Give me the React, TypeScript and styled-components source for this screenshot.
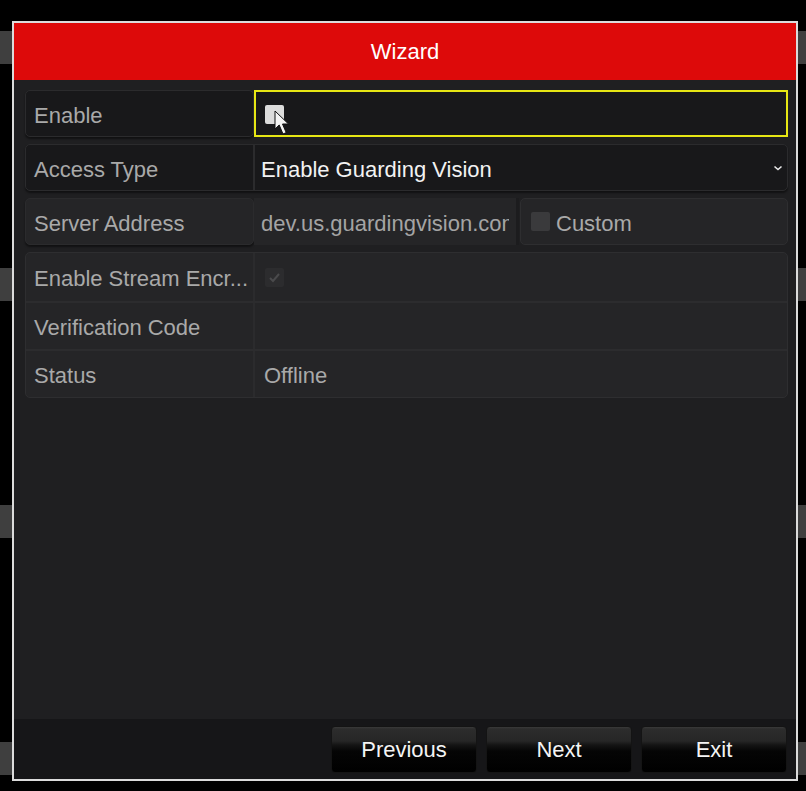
import React from "react";
import styled, { createGlobalStyle } from "styled-components";

const Global = createGlobalStyle`
  html, body { margin: 0; padding: 0; background: #000; }
  body { font-family: "Liberation Sans", Arial, sans-serif; }
  * { box-sizing: border-box; }
`;

const Page = styled.div`
  width: 806px;
  height: 791px;
  background: #000;
  display: flex;
  flex-direction: row;
  overflow: hidden;
`;

const Strip = styled.div<{ $w: number }>`
  width: ${(p) => p.$w}px;
  flex: none;
  display: flex;
  flex-direction: column;
  gap: 204px;
  padding-top: 31px;
`;

const StripBar = styled.div`
  height: 33px;
  background: #3f3f3f;
`;

const Dialog = styled.div`
  margin-top: 21px;
  width: 786px;
  height: 760px;
  flex: none;
  border: 2px solid #dcdcdc;
  background: #1f1f21;
  display: flex;
  flex-direction: column;
`;

const Header = styled.div`
  height: 57px;
  flex: none;
  background: #dd0a0a;
  color: #fff;
  font-size: 22px;
  display: flex;
  align-items: center;
  justify-content: center;
`;

const Content = styled.div`
  flex: 1;
  display: flex;
  flex-direction: column;
  gap: 7px;
  padding: 10px 8px 0 11px;
`;

const Row = styled.div`
  display: grid;
  grid-template-columns: 229px 1fr;
  height: 47px;
`;

const BoxRow = styled.div`
  display: grid;
  grid-template-columns: 229px 1fr;
  height: 47px;
  border: 1px solid #2b2b2d;
  border-radius: 5px;
  background: #18181a;
  box-shadow: 0 2px 2px rgba(0, 0, 0, 0.45);
  overflow: hidden;
`;

const LabelBox = styled.div<{ $disabled?: boolean }>`
  border: 1px solid #2b2b2d;
  border-radius: 5px;
  background: ${(p) => (p.$disabled ? "#252527" : "#18181a")};
  display: flex;
  align-items: center;
  padding: 4px 0 0 8px;
  font-size: 22px;
  color: #a9a9a9;
  white-space: nowrap;
  box-shadow: 0 2px 2px rgba(0, 0, 0, 0.45);
`;

const Label = styled.div`
  display: flex;
  align-items: center;
  padding: 4px 0 0 8px;
  font-size: 22px;
  color: #a9a9a9;
  white-space: nowrap;
  border-right: 2px solid #2b2b2d;
`;

const FocusValue = styled.div`
  border: 2px solid #e6e614;
  background: #18181a;
  display: flex;
  align-items: center;
  padding: 2px 0 0 9px;
`;

const Value = styled.div<{ $bright?: boolean; $pad?: number }>`
  display: flex;
  align-items: center;
  padding: 4px 4px 0 ${(p) => p.$pad ?? 7}px;
  font-size: 22px;
  color: ${(p) => (p.$bright ? "#f2f2f2" : "#a9a9a9")};
  white-space: nowrap;
  overflow: hidden;
  justify-content: space-between;
`;

const SplitValue = styled.div`
  display: grid;
  grid-template-columns: 265px 1fr;
`;

const Address = styled.div`
  display: flex;
  align-items: center;
  padding: 4px 7px 0 7px;
  font-size: 22px;
  color: #a4a4a4;
  white-space: nowrap;
  border-right: 3px solid #1c1c1e;
  background: #252527;
  min-width: 0;
`;

const Clip = styled.span`
  display: block;
  overflow: hidden;
  white-space: nowrap;
  min-width: 0;
`;

const CustomCell = styled.div`
  border: 1px solid #2e2e30;
  border-radius: 5px;
  background: #252527;
  display: flex;
  align-items: center;
  gap: 6px;
  padding: 4px 0 0 10px;
  font-size: 22px;
  color: #a9a9a9;
  margin-left: 1px;
`;

const Group = styled.div`
  border: 1px solid #2e2e30;
  border-radius: 5px;
  background: #252527;
  display: flex;
  flex-direction: column;
  overflow: hidden;
`;

const GroupRow = styled.div`
  display: grid;
  grid-template-columns: 229px 1fr;
  height: 48px;
  & + & {
    border-top: 2px solid #2c2c2e;
  }
`;

const CheckWrap = styled.div`
  position: relative;
  width: 19px;
  height: 19px;
  margin-top: -1px;
`;

const Check = styled.div<{ $tone: "light" | "dark" | "mid"; $shift?: number }>`
  width: 19px;
  height: 19px;
  flex: none;
  border-radius: 2px;
  margin-top: ${(p) => p.$shift ?? -4}px;
  background: ${(p) =>
    p.$tone === "light" ? "#dcdcdc" : p.$tone === "mid" ? "#3a3a3c" : "#2c2c2e"};
  display: flex;
  align-items: center;
  justify-content: center;
`;

const Cursor = styled.svg`
  position: absolute;
  left: 9px;
  top: 5px;
`;

const Chevron = styled.svg`
  flex: none;
  margin-top: -3px;
`;

const Footer = styled.div`
  height: 60px;
  flex: none;
  background: #161618;
  display: flex;
  justify-content: flex-end;
  gap: 9px;
  padding: 7px 9px 6px 0;
`;

const Button = styled.button`
  width: 146px;
  height: 47px;
  border: 1px solid #141414;
  border-radius: 4px;
  background: linear-gradient(
    #3a3a3a 0px,
    #2c2c2c 2px,
    #262626 14px,
    #141414 18px,
    #050505 24px,
    #000 100%
  );
  color: #f4f4f4;
  font-family: "Liberation Sans", Arial, sans-serif;
  font-size: 22px;
  padding: 0;
`;

export default function App() {
  const bars = [0, 1, 2, 3];
  return (
    <>
      <Global />
      <Page>
        <Strip $w={12}>
          {bars.map((b) => (
            <StripBar key={b} />
          ))}
        </Strip>
        <Dialog>
          <Header>Wizard</Header>
          <Content>
            <Row>
              <LabelBox>Enable</LabelBox>
              <FocusValue>
                <CheckWrap>
                  <Check $tone="light" $shift={0} />
                  <Cursor width="16" height="26" viewBox="0 0 16 26">
                    <path
                      d="M1 1 L1 19 L5.2 15 L9 24 L12.2 22.6 L8.5 14 L14.5 14 Z"
                      fill="#f4f4f4"
                      stroke="#111"
                      strokeWidth="1"
                      strokeLinejoin="round"
                    />
                  </Cursor>
                </CheckWrap>
              </FocusValue>
            </Row>
            <BoxRow>
              <Label>Access Type</Label>
              <Value $bright $pad={6}>
                <span>Enable Guarding Vision</span>
                <Chevron width="10" height="8" viewBox="0 0 10 8">
                  <path
                    d="M1.5 2.5 L5 5.5 L8.5 2.5"
                    fill="none"
                    stroke="#e8e8e8"
                    strokeWidth="1.6"
                  />
                </Chevron>
              </Value>
            </BoxRow>
            <Row>
              <LabelBox $disabled>Server Address</LabelBox>
              <SplitValue>
                <Address>
                  <Clip>dev.us.guardingvision.com</Clip>
                </Address>
                <CustomCell>
                  <Check $tone="mid" />
                  Custom
                </CustomCell>
              </SplitValue>
            </Row>
            <Group>
              <GroupRow>
                <Label>Enable Stream Encr...</Label>
                <Value $pad={10}>
                  <Check $tone="dark">
                    <svg width="13" height="13" viewBox="0 0 13 13">
                      <path
                        d="M2 7 L5 10 L11 3"
                        fill="none"
                        stroke="#4a4a4c"
                        strokeWidth="2"
                      />
                    </svg>
                  </Check>
                </Value>
              </GroupRow>
              <GroupRow>
                <Label>Verification Code</Label>
                <Value />
              </GroupRow>
              <GroupRow>
                <Label>Status</Label>
                <Value $pad={9}>Offline</Value>
              </GroupRow>
            </Group>
          </Content>
          <Footer>
            <Button>Previous</Button>
            <Button>Next</Button>
            <Button>Exit</Button>
          </Footer>
        </Dialog>
        <Strip $w={8}>
          {bars.map((b) => (
            <StripBar key={b} />
          ))}
        </Strip>
      </Page>
    </>
  );
}
